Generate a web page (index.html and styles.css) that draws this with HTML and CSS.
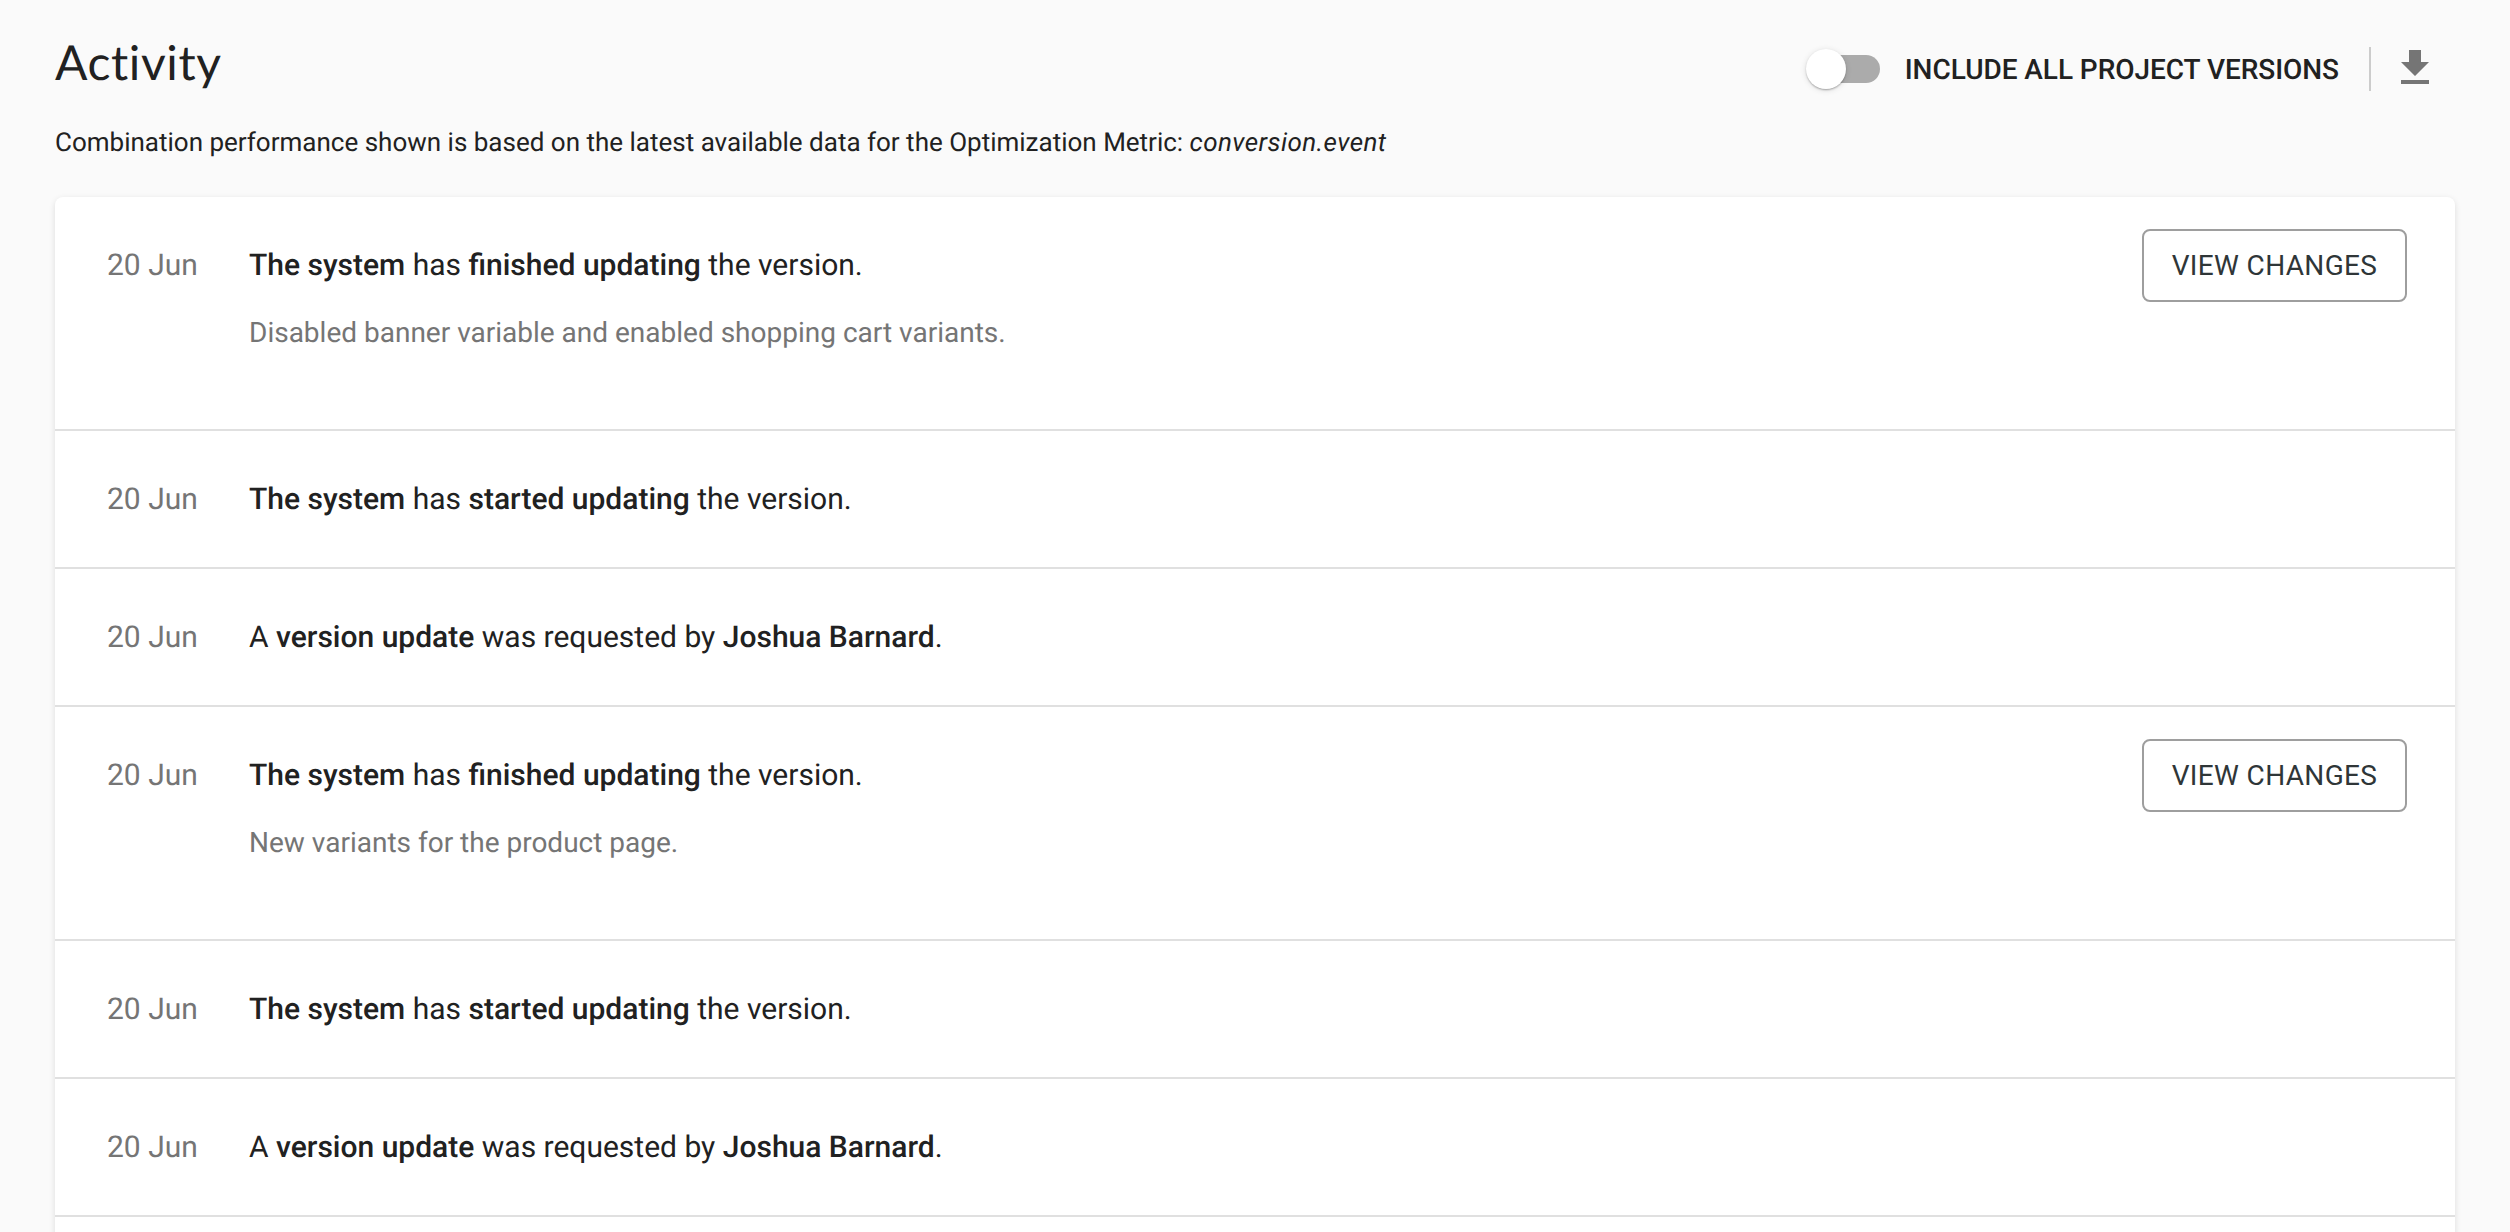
FILE: index.html
```html
<!DOCTYPE html>
<html lang="en">
<head>
<meta charset="utf-8">
<title>Activity</title>
<link rel="stylesheet" href="styles.css">
</head>
<body>
<main class="page">
  <header class="head">
    <h1 class="title">Activity</h1>
    <div class="tools">
      <span class="switch"><span class="track"></span><span class="thumb"></span></span>
      <span class="switch-label">INCLUDE ALL PROJECT VERSIONS</span>
      <span class="divider"></span>
      <svg class="download" viewBox="0 0 24 24" width="48" height="48"><path d="M19 9h-4V3H9v6H5l7 7 7-7zM5 18v2h14v-2H5z"/></svg>
    </div>
  </header>
  <p class="note">Combination performance shown is based on the latest available data for the Optimization Metric: <em>conversion.event</em></p>
  <section class="card">
    <article class="row">
      <div class="date">20 Jun</div>
      <div class="body"><div class="msg"><b>The system</b> has <b>finished updating</b> the version.</div><div class="detail">Disabled banner variable and enabled shopping cart variants.</div></div>
      <button class="btn">VIEW CHANGES</button>
    </article>
    <article class="row">
      <div class="date">20 Jun</div>
      <div class="body"><div class="msg"><b>The system</b> has <b>started updating</b> the version.</div></div>
    </article>
    <article class="row">
      <div class="date">20 Jun</div>
      <div class="body"><div class="msg">A <b>version update</b> was requested by <b>Joshua Barnard</b>.</div></div>
    </article>
    <article class="row">
      <div class="date">20 Jun</div>
      <div class="body"><div class="msg"><b>The system</b> has <b>finished updating</b> the version.</div><div class="detail">New variants for the product page.</div></div>
      <button class="btn">VIEW CHANGES</button>
    </article>
    <article class="row">
      <div class="date">20 Jun</div>
      <div class="body"><div class="msg"><b>The system</b> has <b>started updating</b> the version.</div></div>
    </article>
    <article class="row">
      <div class="date">20 Jun</div>
      <div class="body"><div class="msg">A <b>version update</b> was requested by <b>Joshua Barnard</b>.</div></div>
    </article>
    <article class="row row-empty"></article>
  </section>
</main>
</body>
</html>
```
FILE: styles.css
```css
* { box-sizing: border-box; }
html, body { margin: 0; height: 100%; overflow: hidden; background: #fafafa; }
body { font-family: Roboto, "Liberation Sans", sans-serif; color: #212121; text-rendering: geometricPrecision; }
.page { padding: 0 55px; height: 100%; overflow: hidden; }
.head { display: flex; justify-content: space-between; align-items: flex-start; height: 114px; }
.title { margin: 35px 0 0; font-family: Lato, Roboto, sans-serif; font-size: 48px; line-height: 56px; font-weight: 400; letter-spacing: .6px; color: #212121; }
.tools { display: flex; align-items: center; margin-top: 45px; height: 48px; }
.switch { position: relative; display: block; width: 74px; height: 40px; margin-right: 25px; }
.track { position: absolute; left: 2px; top: 6px; width: 72px; height: 28px; border-radius: 14px; background: #ababab; }
.thumb { position: absolute; left: 0; top: 0; width: 40px; height: 40px; border-radius: 50%; background: #fff; box-shadow: 0 2px 2px -1px rgba(0,0,0,.2), 0 1px 2px rgba(0,0,0,.14), 0 1px 6px rgba(0,0,0,.12); }
.switch-label { position: relative; top: 1px; font-size: 28px; line-height: 40px; font-weight: 500; letter-spacing: -.05px; color: #212121; }
.divider { width: 2px; height: 44px; margin: 0 20px 0 30px; background: #ccc; }
.download { fill: #757575; display: block; margin: -2px 16px 0 0; }
.note { margin: 0; height: 83px; padding-top: 9px; font-size: 26px; line-height: 40px; color: #212121; }
.note em { letter-spacing: .4px; }
.card { background: #fff; border-radius: 8px 8px 0 0; box-shadow: 0 2px 6px rgba(0,0,0,.12); }
.row { display: flex; align-items: flex-start; padding: 32px 48px 32px 52px; border-bottom: 2px solid #e0e0e0; }
.row-empty { border-bottom: 0; height: 60px; }
.date { width: 142px; flex: none; padding-top: 17px; font-size: 30px; line-height: 40px; font-weight: 400; color: #757575; }
.body { flex: 1; padding: 17px 0 15px; }
.msg { font-size: 30px; line-height: 40px; color: #212121; }
.msg b { font-weight: 500; }
.detail { margin: 27px 0 29px; font-size: 28px; line-height: 40px; color: #757575; }
.btn { flex: none; width: 265px; height: 73px; padding: 0; border: 2px solid #9e9e9e; border-radius: 8px; background: #fff; font: 400 28px/1 Roboto, sans-serif; letter-spacing: .35px; color: #2f3638; }
```
